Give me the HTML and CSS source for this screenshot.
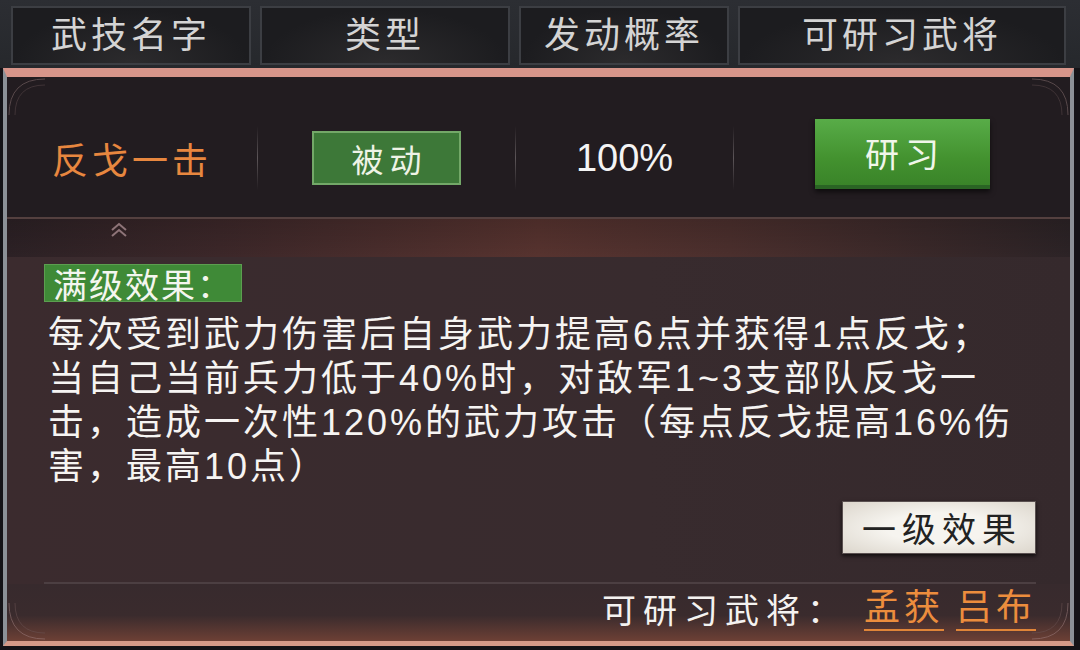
FILE: index.html
```html
<!DOCTYPE html>
<html lang="zh-CN">
<head>
  <meta charset="UTF-8">
  <title>武技研习</title>
  <meta name="viewport" content="width=device-width, initial-scale=1.0">
  <link rel="stylesheet" href="styles.css">
</head>
<body>
  <div class="tabs">
    <div class="tab tab-name">武技名字</div>
    <div class="tab tab-type">类型</div>
    <div class="tab tab-rate">发动概率</div>
    <div class="tab tab-gen">可研习武将</div>
  </div>

  <div class="panel">
    <svg class="corner corner-tl" width="40" height="40" viewBox="0 0 40 40">
      <path d="M2 38 Q2 2 38 2" fill="none" stroke="#8c7474" stroke-width="1"/>
      <path d="M8 38 Q8 8 38 8" fill="none" stroke="#5c4a4c" stroke-width="1"/>
    </svg>
    <svg class="corner corner-tr" width="40" height="40" viewBox="0 0 40 40">
      <path d="M38 38 Q38 2 2 2" fill="none" stroke="#8c7474" stroke-width="1"/>
      <path d="M32 38 Q32 8 2 8" fill="none" stroke="#5c4a4c" stroke-width="1"/>
    </svg>
    <svg class="corner corner-bl" width="40" height="40" viewBox="0 0 40 40">
      <path d="M2 2 Q2 38 38 38" fill="none" stroke="#a08080" stroke-width="1"/>
      <path d="M8 2 Q8 32 38 32" fill="none" stroke="#6c5454" stroke-width="1"/>
    </svg>
    <svg class="corner corner-br" width="40" height="40" viewBox="0 0 40 40">
      <path d="M38 2 Q38 38 2 38" fill="none" stroke="#a08080" stroke-width="1"/>
      <path d="M32 2 Q32 32 2 32" fill="none" stroke="#6c5454" stroke-width="1"/>
    </svg>

    <div class="skill-row">
      <div class="cell cell-name">反戈一击</div>
      <div class="sep"></div>
      <div class="cell cell-type"><span class="tag-passive">被动</span></div>
      <div class="sep"></div>
      <div class="cell cell-rate">100%</div>
      <div class="sep"></div>
      <div class="cell cell-action"><button class="btn-study">研习</button></div>
    </div>

    <div class="band">
      <svg class="chevron" width="18" height="16" viewBox="0 0 18 16">
        <path d="M2 8 L9 2 L16 8 M2 14 L9 8 L16 14" fill="none" stroke="#8e7478" stroke-width="2"/>
      </svg>
    </div>

    <div class="detail">
      <div class="label-max">满级效果：</div>
      <p class="desc">
        每次受到武力伤害后自身武力提高6点并获得1点反戈；<br>
        当自己当前兵力低于40%时，对敌军1~3支部队反戈一<br>
        击，造成一次性120%的武力攻击（每点反戈提高16%伤<br>
        害，最高10点）
      </p>
      <div class="level-row">
        <button class="btn-level">一级效果</button>
      </div>
    </div>

    <div class="footer">
      <span class="footer-label">可研习武将：</span>
      <a class="general" href="#">孟获</a>
      <a class="general" href="#">吕布</a>
    </div>
  </div>
</body>
</html>
```

FILE: styles.css
```css
* {
  box-sizing: border-box;
}

body {
  margin: 0;
  width: 1080px;
  height: 650px;
  overflow: hidden;
  background: #141317;
  font-family: "Liberation Sans", "Noto Sans CJK SC", sans-serif;
  color: #f2f0ee;
}

/* header tabs */
.tabs {
  display: flex;
  gap: 9px;
  height: 68px;
  padding: 6px 14px 3px 11px;
  background: linear-gradient(#2c2e33, #26282c);
}

.tab {
  display: flex;
  align-items: center;
  justify-content: center;
  border: 2px solid #3c3e43;
  background: radial-gradient(ellipse at 50% 100%, #2c2b2d 0%, #1c1c1f 70%);
  color: #d4d4d4;
  font-size: 36px;
  letter-spacing: 4px;
  line-height: 1;
}

.tab-name { width: 240px; }
.tab-type { width: 250px; }
.tab-rate { width: 210px; }
.tab-gen { flex: 1; }

/* main panel */
.panel {
  position: relative;
  margin: 0 6px 0 3px;
  height: 578px;
  border-top: 9px solid #d7958a;
  border-left: 4px solid #8b9197;
  border-right: 4px solid #8b9197;
  border-bottom: 5px solid #d59a88;
  background: #372a2d;
  display: flex;
  flex-direction: column;
}

.corner {
  position: absolute;
  opacity: 0.5;
}

.corner-tl { top: 0; left: 0; }
.corner-tr { top: 0; right: 0; }
.corner-bl { bottom: 0; left: 0; }
.corner-br { bottom: 0; right: 0; }

.skill-row {
  display: flex;
  align-items: center;
  height: 141px;
  padding-top: 22px;
  background: #221c20;
}

.cell {
  display: flex;
  align-items: center;
  justify-content: center;
  height: 100%;
}

.cell-name {
  width: 250px;
  color: #e8873f;
  font-size: 36px;
  letter-spacing: 4px;
}

.cell-type { width: 257px; }
.cell-rate {
  width: 217px;
  font-size: 38px;
  color: #f4f4f4;
}
.cell-action { flex: 1; }

.sep {
  width: 1px;
  height: 64px;
  background: linear-gradient(rgba(120, 110, 115, 0), #5c5558 50%, rgba(120, 110, 115, 0));
}

.tag-passive {
  display: flex;
  align-items: center;
  justify-content: center;
  width: 149px;
  height: 54px;
  background: #3d7838;
  border: 2px solid #73a868;
  color: #eef3e6;
  font-size: 32px;
  letter-spacing: 6px;
  padding-left: 6px;
}

.btn-study {
  width: 175px;
  height: 70px;
  border: none;
  border-bottom: 4px solid #2a6424;
  background: linear-gradient(#58ac48, #43922f 60%, #3a8429);
  box-shadow: 0 3px 5px rgba(0, 0, 0, 0.6);
  color: #f0f6ea;
  font-family: inherit;
  font-size: 34px;
  letter-spacing: 6px;
  padding: 0 0 0 6px;
  margin-top: -8px;
}

.band {
  height: 40px;
  border-top: 2px solid #54403f;
  padding-left: 103px;
  padding-top: 3px;
  background:
    linear-gradient(rgba(0, 0, 0, 0.15), rgba(0, 0, 0, 0)),
    linear-gradient(90deg, #2c2125 0%, #3c2729 20%, #57332f 50%, #4b2f2d 68%, #2c2326 100%);
}

/* lower detail */
.detail {
  padding: 7px 34px 0 37px;
  background: linear-gradient(90deg, #3b2b2e, #382b2e 60%, #35292c);
}

.label-max {
  display: inline-flex;
  align-items: center;
  height: 38px;
  padding: 0 8px;
  background: #3f8a37;
  border: 1px solid #5c9e50;
  color: #f4f6ef;
  font-size: 34px;
  letter-spacing: 2px;
}

.desc {
  margin: 11px 0 0 4px;
  font-size: 36px;
  line-height: 44px;
  letter-spacing: 3px;
  color: #f6f4f2;
  white-space: nowrap;
}

.level-row {
  display: flex;
  justify-content: flex-end;
  margin-top: 12px;
  padding-bottom: 28px;
  border-bottom: 2px solid #4c3f42;
}

.btn-level {
  width: 194px;
  height: 53px;
  border: 1px solid #5a5050;
  background: radial-gradient(ellipse at 50% 50%, #f6f4ef 40%, #dcd6cc 100%);
  box-shadow: 0 2px 4px rgba(0, 0, 0, 0.7);
  color: #222;
  font-family: inherit;
  font-size: 34px;
  letter-spacing: 6px;
  padding: 0 0 0 6px;
}

.footer {
  flex: 1;
  display: flex;
  align-items: center;
  justify-content: flex-end;
  gap: 12px;
  padding: 0 34px 8px 0;
  background: linear-gradient(#372a2d 0%, #3a2b2d 55%, #6d4035 100%);
}

.footer-label {
  font-size: 34px;
  letter-spacing: 7px;
  margin-right: 4px;
  color: #f4f2f0;
}

.general {
  color: #ec8d3d;
  font-size: 36px;
  letter-spacing: 4px;
  text-decoration: none;
  border-bottom: 2px solid #e08538;
  line-height: 42px;
}
```
